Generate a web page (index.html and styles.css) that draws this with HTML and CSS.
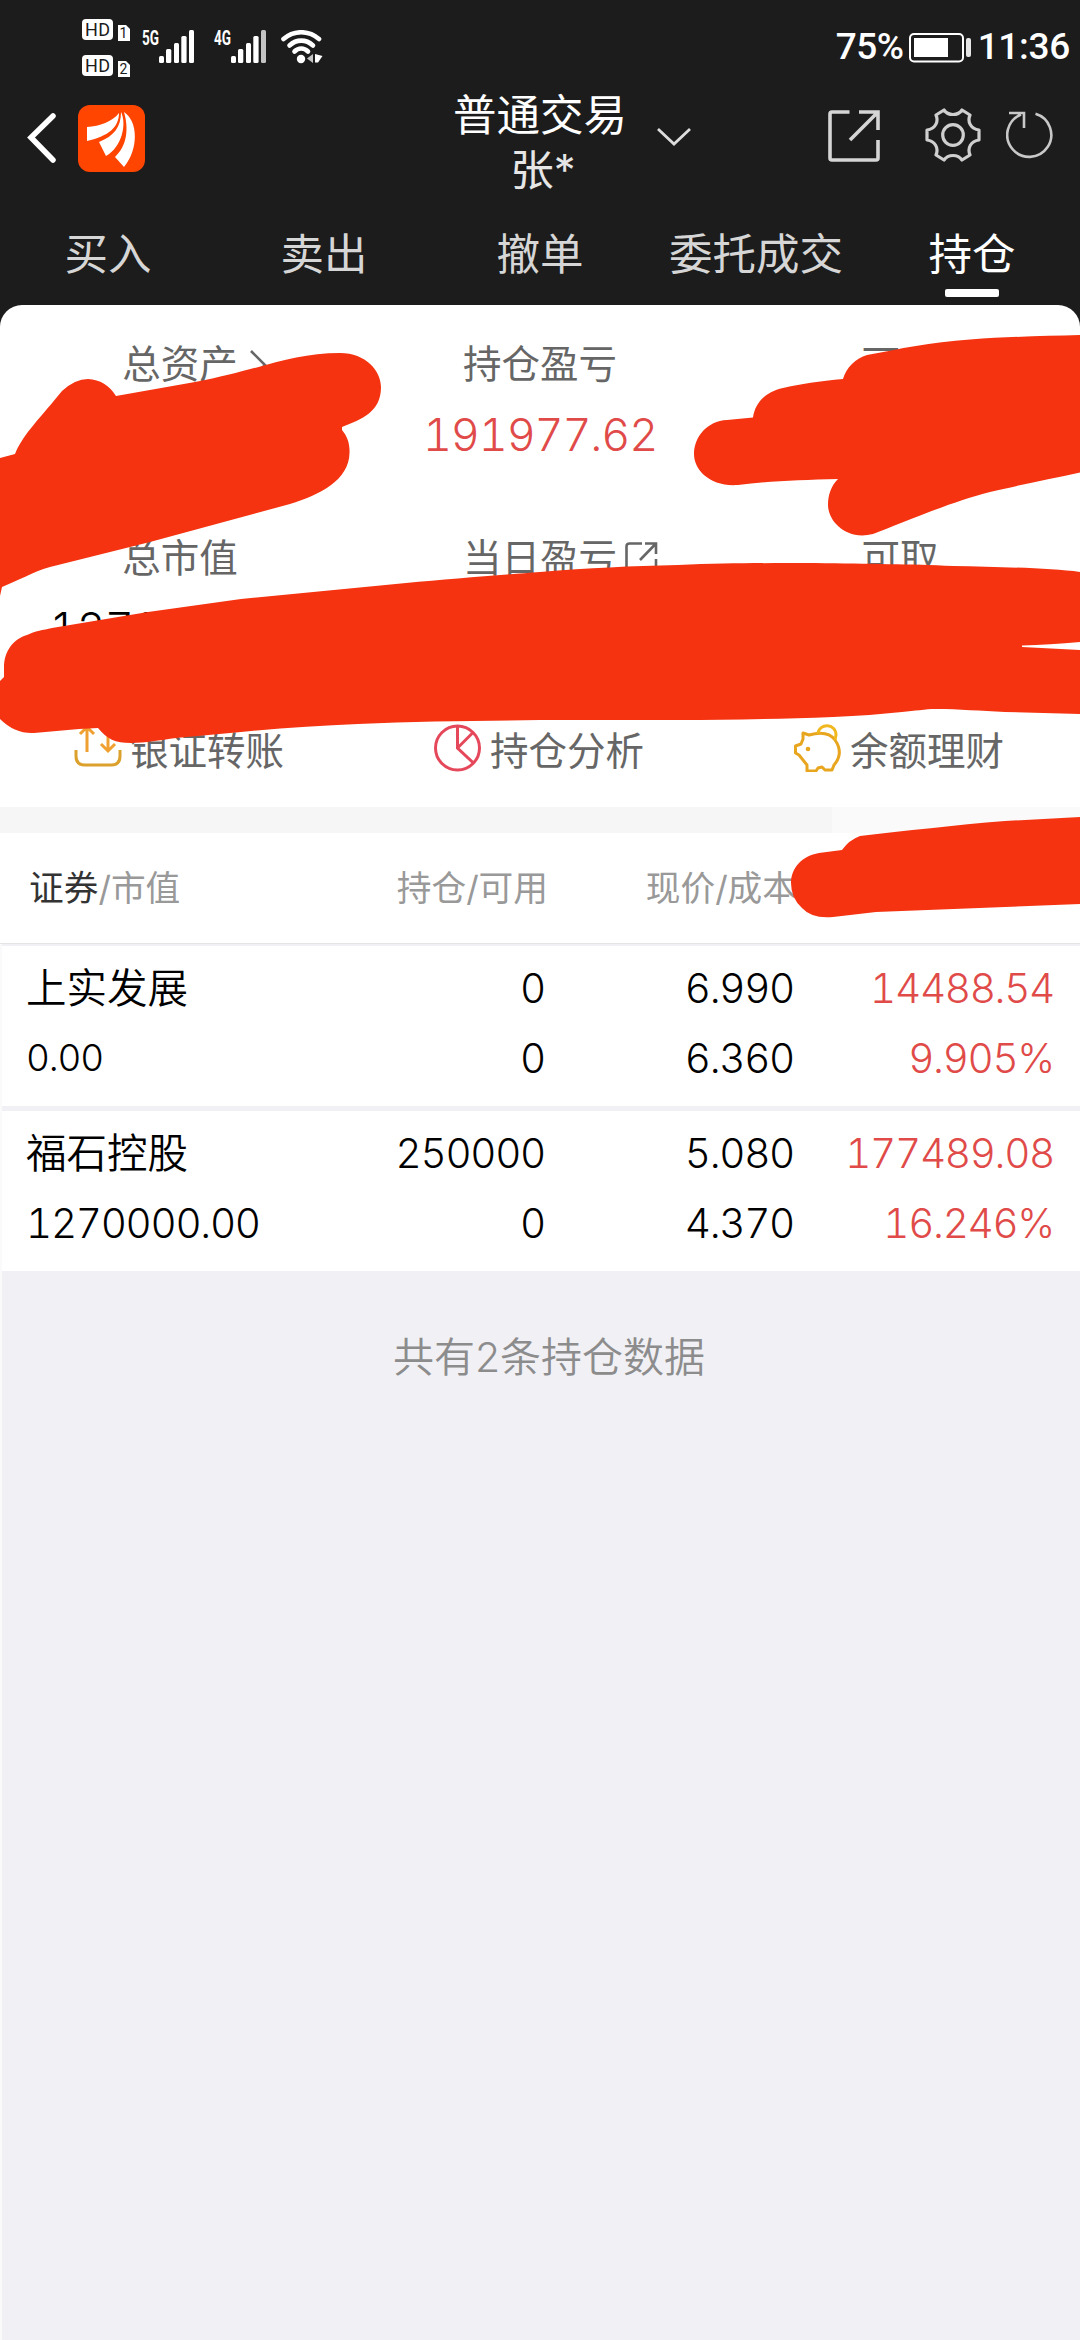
FILE: index.html
```html
<!DOCTYPE html>
<html lang="zh-CN">
<head>
    <meta charset="UTF-8">
    <meta name="viewport" content="width=device-width, initial-scale=1.0">
    <title>持仓</title>
    <link rel="stylesheet" href="styles.css">
</head>
<body>
    <header class="top">
        <div class="status-bar">
            <svg class="hd" width="48" height="58" viewBox="0 0 48 58">
                <rect x="0" y="0" width="31" height="21" rx="4" fill="#fff"/>
                <rect x="0" y="36" width="31" height="21" rx="4" fill="#fff"/>
                <path d="M36 6h8l4 4v12H36zM36 42h8l4 4v12H36z" fill="#fff"/>
                <text class="hd-text" x="15.5" y="17" textLength="25">HD</text>
                <text class="hd-text" x="15.5" y="53" textLength="25">HD</text>
                <text class="sim-text" x="41.5" y="19">1</text>
                <text class="sim-text" x="41.5" y="55">2</text>
            </svg>
            <svg class="signal" width="54" height="44" viewBox="0 -10 54 44">
                <text class="net-text" x="1" y="15" textLength="17" lengthAdjust="spacingAndGlyphs">5G</text>
                <g fill="#fff">
                    <rect x="18" y="26" width="5" height="7" rx="1.5"/>
                    <rect x="25" y="19" width="5.3" height="14" rx="1.5"/>
                    <rect x="33" y="13" width="5" height="20" rx="1.5"/>
                    <rect x="40.3" y="6" width="5.3" height="27" rx="1.5"/>
                    <rect x="48" y="0" width="5" height="33" rx="1.5"/>
                </g>
            </svg>
            <svg class="signal" width="54" height="44" viewBox="0 -10 54 44">
                <text class="net-text" x="1" y="15" textLength="17" lengthAdjust="spacingAndGlyphs">4G</text>
                <g fill="#fff">
                    <rect x="18" y="26" width="5" height="7" rx="1.5"/>
                    <rect x="25" y="19" width="5.3" height="14" rx="1.5"/>
                    <rect x="33" y="13" width="5" height="20" rx="1.5"/>
                    <rect x="40.3" y="6" width="5.3" height="27" rx="1.5"/>
                    <rect x="48" y="0" width="5" height="33" rx="1.5" fill="#c4c4c4"/>
                </g>
            </svg>
            <svg class="wifi" width="42" height="34" viewBox="0 0 42 34">
                <g fill="none" stroke="#fff" stroke-width="4.6" stroke-linecap="round">
                    <path d="M2.5 9C13 0 27.5 0 38 9"/>
                    <path d="M8.5 15.5c7-6.5 16.5-6.5 23.5 0"/>
                    <path d="M13.5 21.5c4-4 9.5-4 13.5 0"/>
                </g>
                <circle cx="20" cy="29" r="4.2" fill="#fff"/>
                <path d="M32 24v9l-6-4.5z" fill="#c4c4c4"/>
                <path d="M34 24l7.5 2-4.5 6.5H34z" fill="#fff"/>
            </svg>
            <span class="battery-text">75%</span>
            <svg class="battery" width="63" height="30" viewBox="0 0 63 30">
                <rect x="1" y="1" width="53" height="27.5" rx="4" fill="none" stroke="#fff" stroke-width="2"/>
                <rect x="5" y="5" width="34" height="19" fill="#fff"/>
                <rect x="57" y="5" width="5" height="19" rx="2" fill="#e6e6e6"/>
            </svg>
            <span class="clock">11:36</span>
        </div>

        <div class="title-bar">
            <svg class="back" width="32" height="52" viewBox="0 0 32 52">
                <path d="M27 4L5 25.500L27 48" fill="none" stroke="#fff" stroke-width="5.5" stroke-linecap="round"/>
            </svg>
            <svg class="logo" width="67" height="67" viewBox="0 0 67 67">
                <rect width="67" height="67" rx="12" fill="#ff4500"/>
                <g fill="#fff">
                    <path d="M9 22C22 21 34 17 41 8C41 22 31 31 9 36z"/>
                    <path d="M43 7C49 19 44 42 28 51L21 37C36 31 43 22 43 7z"/>
                    <path d="M46 7C60 16 61 44 46 62L37 52C49 41 51 24 46 7z"/>
                </g>
            </svg>
            <div class="account">
                <div>普通交易</div>
                <div class="account-name">张*</div>
            </div>
            <svg class="arrow" width="36" height="20" viewBox="0 0 36 20">
                <path d="M2 2L18 17L34 2" fill="none" stroke="#ddd" stroke-width="2.8"/>
            </svg>
            <svg class="share" width="52" height="52" viewBox="0 0 52 52">
                <path d="M21.5 2H4Q2 2 2 4V48Q2 50 4 50H48Q50 50 50 48V30M31 2H50V20M50 2L22 30" fill="none" stroke="#d5d5d5" stroke-width="3.6"/>
            </svg>
            <svg class="gear" width="56" height="54" viewBox="0 0 56 54">
                <g fill="none" stroke="#cfcfcf" stroke-width="3.2" stroke-linejoin="round">
                    <path d="M19 2C23 8 33 8 37 2L45 7C42 14 46 21 54 22V32C46 33 42 40 45 47L37 52C33 46 23 46 19 52L11 47C14 40 10 33 2 32V22C10 21 14 14 11 7Z"/>
                    <circle cx="28" cy="27" r="10.3"/>
                </g>
            </svg>
            <svg class="refresh" width="48" height="48" viewBox="0 0 48 48">
                <path d="M29.5 2.8A22 22 0 1 1 15 3.5M3 2H18V17" fill="none" stroke="#c8c8c8" stroke-width="2.6"/>
            </svg>
        </div>

        <nav class="tabs">
            <div class="tab">买入</div>
            <div class="tab">卖出</div>
            <div class="tab">撤单</div>
            <div class="tab">委托成交</div>
            <div class="tab active">持仓</div>
        </nav>
    </header>

    <main>
        <section class="summary">
            <div class="stats">
                <div class="stat">
                    <div class="label">总资产
                        <svg class="label-icon" width="20" height="36" viewBox="0 0 20 36"><path d="M3 3L17 17L3 31" fill="none" stroke="#666" stroke-width="2.6"/></svg>
                    </div>
                </div>
                <div class="stat">
                    <div class="label">持仓盈亏</div>
                    <div class="value red">191977.62</div>
                </div>
                <div class="stat">
                    <div class="label">可用</div>
                </div>
                <div class="stat">
                    <div class="label">总市值</div>
                    <div class="value">1270000.00</div>
                </div>
                <div class="stat">
                    <div class="label">当日盈亏
                        <svg class="label-icon near" width="33" height="33" viewBox="0 0 33 33"><path d="M17 1.5H4.5Q1.5 1.5 1.5 4.5V31H31V17M20 1.5H31V12M31 1.5L15 18" fill="none" stroke="#666" stroke-width="2.6"/></svg>
                    </div>
                </div>
                <div class="stat">
                    <div class="label">可取</div>
                </div>
            </div>

            <div class="actions">
                <div class="action">
                    <svg width="48" height="48" viewBox="0 0 48 48">
                        <path d="M13 28V4M6 10L13 3L20 10M34 3V27M27 20L34 27L41 20" fill="none" stroke="#f0a030" stroke-width="3"/>
                        <path d="M2 26V32Q2 41 11 41H37Q46 41 46 32V26" fill="none" stroke="#dba12c" stroke-width="3"/>
                    </svg>
                    <span>银证转账</span>
                </div>
                <div class="action">
                    <svg width="48" height="48" viewBox="0 0 48 48">
                        <g fill="none" stroke="#e5485a" stroke-width="3">
                            <circle cx="23.5" cy="24" r="22"/>
                            <path d="M23.5 2V24L39.5 39M23.5 24L39 8.5"/>
                        </g>
                    </svg>
                    <span>持仓分析</span>
                </div>
                <div class="action">
                    <svg width="48" height="48" viewBox="0 0 48 48">
                        <g fill="none" stroke="#e8a51e" stroke-width="3" stroke-linejoin="round">
                            <path d="M9 9L15 11C26 8 36 9 41 16C48 26 46 34 40 41L38 46H31L28 43L24 44L22 47H13V41L5 31L1.5 29V22L7 20L9 15Z"/>
                            <path d="M24 9.5C25 -1 42 -1 42 11L41 16" stroke="#f0b81e"/>
                        </g>
                        <circle cx="14" cy="25" r="2.3" fill="#e8a51e"/>
                    </svg>
                    <span>余额理财</span>
                </div>
            </div>
        </section>

        <div class="band"></div>

        <section class="positions">
            <div class="row head">
                <div><b>证券</b>/市值</div>
                <div>持仓/可用</div>
                <div>现价/成本</div>
                <div></div>
            </div>
            <div class="row">
                <div>上实发展<br><span class="small">0.00</span></div>
                <div>0<br>0</div>
                <div>6.990<br>6.360</div>
                <div class="red">14488.54<br>9.905%</div>
            </div>
            <div class="row">
                <div>福石控股<br><span class="num">1270000.00</span></div>
                <div>250000<br>0</div>
                <div>5.080<br>4.370</div>
                <div class="red">177489.08<br>16.246%</div>
            </div>
        </section>

        <p class="total">共有2条持仓数据</p>
    </main>

    <!-- marker strokes over the private numbers -->
    <svg class="marker" width="1080" height="640" viewBox="0 300 1080 640">
        <g fill="#f53310">
            <path d="M0 458L15 454C23 434 42 416 62 391Q75 379 88 379Q106 380 116 396L195 382C260 370 290 353 340 353C366 353 381 371 381 387C381 412 362 419 342 427V430C347 436 350 443 349.5 453C349 480 320 495 290 504L150 542L50 567C35 571 15 582 2 587L0 596Z"/>
            <path d="M727 420L753 417.5C755 403 765 392 783 388C800 384 820 381 843 379C846 368 856 358 867 355C900 349 930 342 970 339.5C1010 336.5 1045 336 1080 335V472.5C1050 479 1015 486 990 492C950 502 900 524 873 534C845 541 828 520 828 505C828 495 831 486 838 479C800 480 770 481 738 485C710 487 694 470 694 454C694 437 707 421 727 420Z"/>
            <path d="M4 677V668C4 650 14 639 27 635C35 631 43 630 52 628L148 612L241 599L406 583C450 579 500 575 540 572C590 568 630 566 678 565C730 563 770 563 815 563C870 564 910 564 953 566C1000 567 1050 568 1080 572V642C1060 644 1040 645 1022 645.5V647L1080 650V714L1005 712C980 711 960 709 936 709C925 709 915 711 902 712C880 714 860 716 833 717C780 719 730 720 678 720H540C480 721 420 721 358 724C320 726 280 728 241 732L176 738C160 740 145 743 131 743C115 743 107 739 98 728L79 729L34 733Q15 734 0 719V681Z"/>
            <path d="M791 883C791 868 802 856 819 853L842 850Q849 840 860 836C905 831 955 825 1005 821L1080 817V904L876 912L833 917Q812 919 802 908Q791 898 791 883Z"/>
        </g>
    </svg>
</body>
</html>
```
FILE: styles.css
```css
* {
    box-sizing: border-box;
}
body {
    margin: 0;
    position: relative;
    min-height: 2340px;
    font-family: Inter, "Noto Sans CJK SC", sans-serif;
    font-weight: 350;
    background: linear-gradient(90deg, #fafafb 2px, #f1f0f5 2px);
}
svg {
    display: block;
    flex-shrink: 0;
}
.red {
    color: #e04b49;
}

/* header */
.top {
    height: 305px;
    background: #1c1c1c;
    color: #fff;
}
.status-bar {
    display: flex;
    align-items: flex-start;
    height: 92px;
    padding: 19px 0 0 82px;
    font-family: Roboto, sans-serif;
    font-weight: 500;
    font-size: 37px;
    line-height: 56px;
}
.hd-text, .sim-text {
    font-size: 18px;
    fill: #1c1c1c;
    text-anchor: middle;
    font-weight: 400;
}
.sim-text {
    font-size: 14px;
}
.net-text {
    font-size: 20px;
    font-weight: 700;
    fill: #fff;
}
.signal {
    margin: 1px 7px 0 11px;
}
.wifi {
    margin: 11px 0 0 7px;
}
.battery-text {
    margin-left: auto;
    letter-spacing: -0.5px;
}
.battery {
    margin: 14px 6px 0 5px;
}
.clock {
    margin-right: 10px;
    letter-spacing: -0.3px;
}
.title-bar {
    display: flex;
    align-items: flex-start;
    height: 120px;
    padding-left: 26px;
}
.back {
    margin-top: 20px;
}
.logo {
    margin: 13px 0 0 20px;
}
.account {
    width: 172px;
    margin: -4px 0 0 308px;
    font-size: 43.5px;
    line-height: 55px;
    text-align: center;
    white-space: nowrap;
    font-weight: 400;
}
.account-name {
    color: #e6e6e6;
    padding-left: 8px;
}
.arrow {
    margin: 35px 0 0 31px;
}
.share {
    margin: 18px 0 0 136px;
}
.gear {
    margin: 16px 0 0 45px;
}
.refresh {
    margin: 19px 0 0 25px;
}
.tabs {
    display: grid;
    grid-template-columns: repeat(5, 1fr);
    height: 93px;
    padding-top: 12px;
}
.tab {
    display: flex;
    flex-direction: column;
    align-items: center;
    font-size: 43.5px;
    line-height: 60px;
    color: #d6d6d6;
    font-weight: 400;
}
.tab.active {
    color: #fff;
}
.tab.active::after {
    content: "";
    width: 54px;
    height: 8px;
    margin-top: 5px;
    border-radius: 2px;
    background: #fff;
}

/* summary */
.summary {
    height: 502px;
    padding-top: 34px;
    background: linear-gradient(#1c1c1c 30px, transparent 30px);
    position: relative;
    z-index: 0;
}
.summary::before {
    content: "";
    position: absolute;
    inset: 0;
    z-index: -1;
    border-radius: 22px 22px 0 0;
    background: #fff;
}
.stats {
    display: grid;
    grid-template-columns: repeat(3, 1fr);
    grid-auto-rows: 121px;
    row-gap: 73px;
    text-align: center;
}
.label {
    position: relative;
    width: max-content;
    margin: 0 auto 21px;
    font-size: 38.5px;
    line-height: 50px;
    color: #666;
    font-weight: 400;
}
.label-icon {
    position: absolute;
    left: calc(100% + 10px);
    top: 9px;
}
.label-icon.near {
    left: calc(100% + 8px);
}
.value {
    font-size: 45px;
    line-height: 50px;
    letter-spacing: -1.2px;
    font-feature-settings: "tnum";
}
.actions {
    display: grid;
    grid-template-columns: repeat(3, 1fr);
    margin-top: 70px;
}
.action {
    display: flex;
    align-items: flex-start;
    gap: 8px;
    padding-left: 74px;
    font-size: 38.5px;
    line-height: 54px;
    color: #666;
    font-weight: 400;
}
.band {
    height: 26px;
    background: linear-gradient(90deg, #f6f6f6 832px, #fafafa 832px);
}

/* positions */
.row {
    display: grid;
    grid-template-columns: 270px 249px 249px 260px;
    height: 160px;
    margin-left: 2px;
    padding: 8px 26px 6px 24px;
    background: #fff;
    font-size: 40.5px;
    line-height: 70px;
    text-align: right;
    letter-spacing: -1.3px;
    font-feature-settings: "tnum";
}
.row + .row {
    margin-top: 5px;
}
.row > :first-child {
    text-align: left;
    letter-spacing: 0;
}
.num {
    letter-spacing: -1.3px;
}
.small {
    position: relative;
    top: -2px;
    font-size: 37px;
    letter-spacing: -1.2px;
}
.row.head {
    height: 111px;
    margin-left: 0;
    padding: 20px 24px 0 29px;
    font-size: 34.7px;
    font-weight: 400;
    letter-spacing: 0;
    color: #999;
    border-bottom: 1px solid #e4e4e6;
}
.head b {
    font-weight: 400;
    color: #333;
}
.row.head + .row {
    margin-top: 2px;
}
.total {
    margin: 51px 0 0;
    padding-left: 18px;
    font-size: 41px;
    line-height: 70px;
    text-align: center;
    color: #8c8c8c;
}

.marker {
    position: absolute;
    left: 0;
    top: 300px;
}
```
